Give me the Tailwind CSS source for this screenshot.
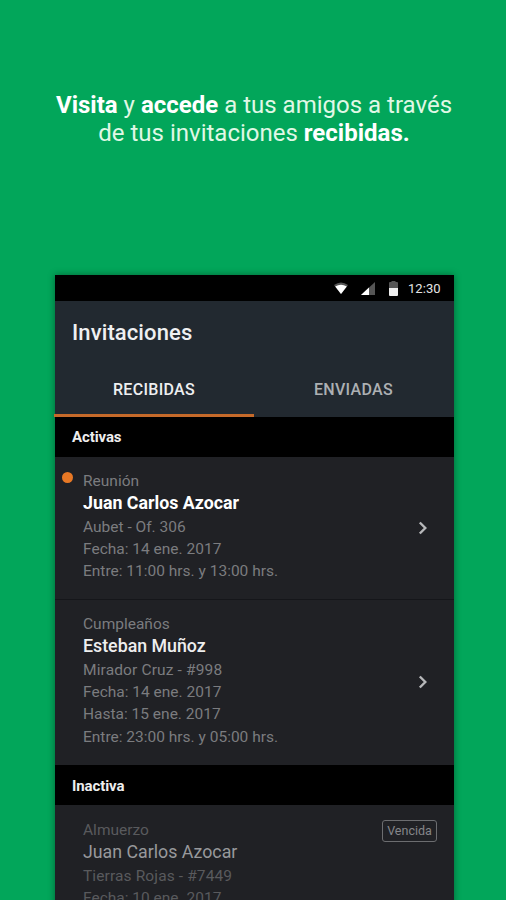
<!DOCTYPE html>
<html lang="es">
<head>
<meta charset="utf-8">
<title>Invitaciones</title>
<script src="https://cdn.jsdelivr.net/npm/@tailwindcss/browser@4"></script>
</head>
<body class="h-[900px] w-[506px] overflow-hidden bg-[#02a65a] font-['Roboto','Noto_Sans',sans-serif]">
<div class="flex h-[900px] flex-col items-center overflow-hidden">
  <h1 class="h-[275px] w-full shrink-0 whitespace-nowrap pl-[2px] pt-[91px] text-center text-[24px] leading-[28px] text-[#e0f8e6]"><b class="text-white">Visita</b> y <b class="text-white">accede</b> a tus amigos a través<br>de tus invitaciones <b class="text-white">recibidas.</b></h1>

  <main class="ml-[3px] h-[700px] w-[399px] shrink-0 bg-[#202125] shadow-[0_0_7px_rgba(0,0,0,0.4)]">
    <div class="flex h-[26px] items-center bg-black pl-[279px] text-[#e4e4e4]">
      <svg class="h-[12px] w-[14px]" viewBox="0 0 14 12"><path d="M0 3Q7-2 14 3L7 12Z" fill="#555"/><path d="M1.2 4.5Q7 .8 12.8 4.5L7 12Z" fill="#fff"/></svg>
      <svg class="ml-[13px] h-[13px] w-[14px]" viewBox="0 0 14 13"><path d="M0 13L14 0V13Z" fill="#555"/><path d="M0 13L8 5.5V13Z" fill="#fff"/></svg>
      <svg class="ml-[14px] h-[15px] w-[9px]" viewBox="0 0 9 15"><path d="M0 7V2Q0 1 1 1H2.5V0H6.5V1H8Q9 1 9 2V7Z" fill="#555"/><path d="M0 7H9V14Q9 15 8 15H1Q0 15 0 14Z" fill="#eee"/></svg>
      <span class="ml-[10px] pt-px text-[13px] tracking-[0.05px]">12:30</span>
    </div>
    <header class="h-[116px] bg-[#222930]">
      <h2 class="h-[60px] pl-[17px] pt-[18px] text-[22px] font-medium leading-[28px] tracking-[0.1px] text-[#eff0f2]">Invitaciones</h2>
      <nav class="-ml-px flex h-[56px] text-center text-[16px] font-medium leading-[58px] tracking-[0.3px]">
        <div class="w-[200px] border-b-[3px] border-[#c66a2a] text-[#eeeff0]">RECIBIDAS</div>
        <div class="w-[199px] text-[#adb0b3]">ENVIADAS</div>
      </nav>
    </header>
    <h3 class="h-[40px] bg-black pl-[17px] text-[15px] font-bold leading-[41px] tracking-[-0.1px] text-[#eee]">Activas</h3>
    <article class="relative h-[143px] border-b border-[#15161a] pl-[28px] pt-[12.6px] text-[15.5px] leading-[22.3px] text-[#7b7c7f]">
      <i class="absolute left-[7px] top-[15px] size-[11px] rounded-full bg-[#e77825]"></i>
      <p>Reunión</p>
      <p class="h-[24px] text-[17.8px] font-bold leading-[22.5px] text-white">Juan Carlos Azocar</p>
      <p>Aubet - Of. 306</p>
      <p>Fecha: 14 ene. 2017</p>
      <p>Entre: 11:00 hrs. y 13:00 hrs.</p>
      <svg class="absolute left-[363px] top-[64px] h-[14px] w-[11px]" viewBox="0 0 11 14" fill="none" stroke="#b7b8ba" stroke-width="2.4"><path d="M1.8 1.5L7.3 7L1.8 12.5"/></svg>
    </article>
    <article class="relative h-[165px] pl-[28px] pt-[12.6px] text-[15.5px] leading-[22.3px] text-[#7b7c7f]">
      <p>Cumpleaños</p>
      <p class="h-[24px] text-[17.8px] font-medium leading-[22.5px] text-[#eee]">Esteban Muñoz</p>
      <p class="tracking-[0.14px]">Mirador Cruz - #998</p>
      <p>Fecha: 14 ene. 2017</p>
      <p>Hasta: 15 ene. 2017</p>
      <p>Entre: 23:00 hrs. y 05:00 hrs.</p>
      <svg class="absolute left-[363px] top-[75px] h-[14px] w-[11px]" viewBox="0 0 11 14" fill="none" stroke="#b7b8ba" stroke-width="2.4"><path d="M1.8 1.5L7.3 7L1.8 12.5"/></svg>
    </article>
    <h3 class="h-[40px] bg-black pl-[17px] text-[15px] font-bold leading-[42px] tracking-[-0.1px] text-[#eee]">Inactiva</h3>
    <article class="relative pl-[28px] pt-[13.6px] text-[15.5px] leading-[22.3px] text-[#595a5d]">
      <p>Almuerzo</p>
      <p class="h-[24px] text-[17.8px] leading-[22.5px] text-[#98999c]">Juan Carlos Azocar</p>
      <p class="tracking-[0.12px]">Tierras Rojas - #7449</p>
      <p>Fecha: 10 ene. 2017</p>
      <div class="absolute left-[327px] top-[15px] h-[22px] w-[55px] rounded-[3px] border-[1.5px] border-[#6c6d70] text-center text-[12.5px] leading-[20px] text-[#85868a]">Vencida</div>
    </article>
  </main>
</div>
</body>
</html>
